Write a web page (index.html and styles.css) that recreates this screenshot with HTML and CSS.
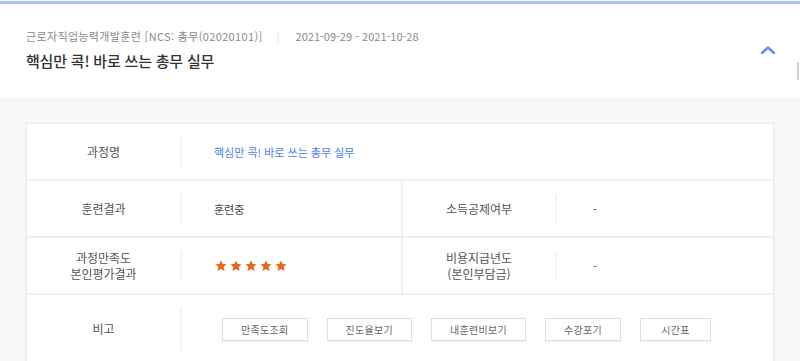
FILE: index.html
```html
<!DOCTYPE html>
<html lang="ko">
<head>
<meta charset="utf-8">
<title>과정 상세</title>
<link rel="stylesheet" href="styles.css">
</head>
<body>
<div class="page">
  <header class="head">
    <div class="head-text">
      <div class="meta">
        <span class="meta-type">근로자직업능력개발훈련 [NCS: 총무(02020101)]</span>
        <span class="meta-sep">|</span>
        <span class="meta-date">2021-09-29 - 2021-10-28</span>
      </div>
      <h1 class="title">핵심만 콕! 바로 쓰는 총무 실무</h1>
    </div>
    <button class="toggle" type="button" aria-label="접기">
      <svg width="16" height="10" viewBox="0 0 16 10"><path d="M2 8 L8 2.5 L14 8" fill="none" stroke="#5b8ef0" stroke-width="2.4" stroke-linecap="round" stroke-linejoin="round"/></svg>
    </button>
    <span class="scroll-mark"></span>
  </header>

  <main class="body">
    <div class="info">
      <div class="row">
        <div class="th">과정명</div>
        <div class="td wide"><div class="td-in"><a class="link" href="#">핵심만 콕! 바로 쓰는 총무 실무</a></div></div>
      </div>
      <div class="row">
        <div class="th">훈련결과</div>
        <div class="td"><div class="td-in">훈련중</div></div>
        <div class="th th-2">소득공제여부</div>
        <div class="td"><div class="td-in dash">-</div></div>
      </div>
      <div class="row">
        <div class="th">과정만족도<br>본인평가결과</div>
        <div class="td"><div class="td-in stars">
          <svg class="star" viewBox="0 0 20 20"><path d="M10 0.8 L12.8 6.6 L19.2 7.2 L14.4 11.6 L15.9 18.4 L10 15 L4.1 18.4 L5.6 11.6 L0.8 7.2 L7.2 6.6 Z"/></svg>
          <svg class="star" viewBox="0 0 20 20"><path d="M10 0.8 L12.8 6.6 L19.2 7.2 L14.4 11.6 L15.9 18.4 L10 15 L4.1 18.4 L5.6 11.6 L0.8 7.2 L7.2 6.6 Z"/></svg>
          <svg class="star" viewBox="0 0 20 20"><path d="M10 0.8 L12.8 6.6 L19.2 7.2 L14.4 11.6 L15.9 18.4 L10 15 L4.1 18.4 L5.6 11.6 L0.8 7.2 L7.2 6.6 Z"/></svg>
          <svg class="star" viewBox="0 0 20 20"><path d="M10 0.8 L12.8 6.6 L19.2 7.2 L14.4 11.6 L15.9 18.4 L10 15 L4.1 18.4 L5.6 11.6 L0.8 7.2 L7.2 6.6 Z"/></svg>
          <svg class="star" viewBox="0 0 20 20"><path d="M10 0.8 L12.8 6.6 L19.2 7.2 L14.4 11.6 L15.9 18.4 L10 15 L4.1 18.4 L5.6 11.6 L0.8 7.2 L7.2 6.6 Z"/></svg>
        </div></div>
        <div class="th th-2">비용지급년도<br>(본인부담금)</div>
        <div class="td"><div class="td-in dash">-</div></div>
      </div>
      <div class="row row-tall">
        <div class="th">비고</div>
        <div class="td wide"><div class="td-in btns">
          <button class="btn" type="button">만족도조회</button>
          <button class="btn" type="button">진도율보기</button>
          <button class="btn" type="button">내훈련비보기</button>
          <button class="btn" type="button">수강포기</button>
          <button class="btn" type="button">시간표</button>
        </div></div>
      </div>
    </div>
  </main>
</div>
</body>
</html>
```

FILE: styles.css
```css
* { box-sizing: border-box; }

html, body {
  margin: 0;
  padding: 0;
  background: #f8f8f9;
  font-family: "Noto Sans CJK KR", "Noto Sans", sans-serif;
  color: #444;
}

.page {
  width: 800px;
  height: 361px;
  overflow: hidden;
  padding-top: 1px;
  background: #f8f8f9;
}

.head {
  position: relative;
  display: flex;
  align-items: flex-start;
  justify-content: space-between;
  background: #fff;
  border-top: 3px solid #a8c4f5;
  height: 96px;
  padding: 24px 24px 0 26px;
}

.head-text {
  display: flex;
  flex-direction: column;
}

.meta {
  display: flex;
  align-items: center;
  font-size: 11px;
  line-height: 16px;
  color: #8a8a8a;
}

.meta-type {
  letter-spacing: 0.35px;
}

.meta-sep {
  color: #dcdcdc;
  margin: 0 16px 0 14px;
}

.meta-date {
  letter-spacing: 0;
}

.title {
  margin: 7px 0 0;
  font-size: 15px;
  line-height: 20px;
  font-weight: 500;
  color: #333;
  letter-spacing: -0.2px;
}

.toggle {
  border: 0;
  background: none;
  padding: 0;
  margin: 0;
  width: 16px;
  height: 10px;
  display: flex;
  align-self: center;
  margin-top: -26px;
}

.scroll-mark {
  position: absolute;
  right: 1px;
  top: 58px;
  width: 2px;
  height: 18px;
  background: #cfcfcf;
}

.body {
  padding: 25px 25px 0;
}

.info {
  background: #fff;
  border: 2px solid #efefef;
  border-bottom: 0;
}

.row {
  display: flex;
  height: 57px;
  border-top: 2px solid #f0f0f0;
}

.row:first-child {
  border-top: 0;
  height: 55px;
}

.row-tall {
  height: 70px;
}

.th {
  width: 153px;
  flex: none;
  display: flex;
  align-items: center;
  justify-content: center;
  text-align: center;
  font-size: 12px;
  line-height: 16px;
  color: #555;
}

.th-2 {
  border-left: 2px solid #f0f0f0;
  width: 154px;
}

.td {
  width: 221px;
  flex: none;
  padding: 13px 0;
  display: flex;
}

.row .td:last-child {
  flex: 1;
  width: auto;
}

.td-in {
  flex: 1;
  display: flex;
  align-items: center;
  border-left: 2px solid #f2f4f7;
  padding-left: 32px;
  font-size: 11px;
  color: #444;
}

.dash {
  padding-left: 36px;
}

.link {
  color: #4a7fe9;
  text-decoration: none;
  font-size: 11px;
}

.stars {
  gap: 3px;
  padding-left: 33px;
}

.star {
  width: 12px;
  height: 12px;
  fill: #e8651f;
}

.btns {
  gap: 19px;
  padding-left: 40px;
}

.btn {
  height: 23px;
  min-width: 71px;
  padding: 0 18px;
  border: 1px solid #dedede;
  background: #fff;
  box-shadow: 0 1px 1px rgba(0, 0, 0, 0.05);
  font-family: "Noto Sans CJK KR", "Noto Sans", sans-serif;
  font-size: 10px;
  letter-spacing: 0.3px;
  color: #666;
  line-height: 21px;
}
```
